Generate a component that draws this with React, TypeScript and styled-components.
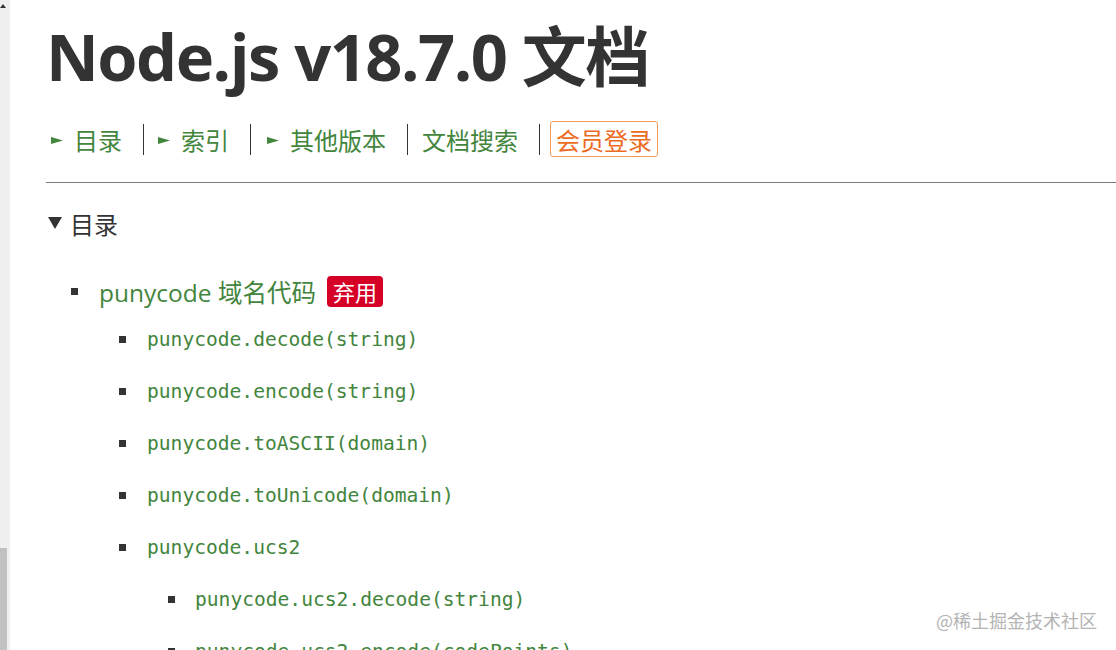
import React from "react";
import styled, { createGlobalStyle } from "styled-components";

const GlobalStyle = createGlobalStyle`
  html, body { margin: 0; padding: 0; background: #fff; }
  body { font-family: "Open Sans", "Noto Sans CJK SC", sans-serif; }
  * { box-sizing: border-box; }
`;

const GREEN = "#43853d";

const Page = styled.div`
  position: relative;
  width: 1116px;
  height: 650px;
  overflow: hidden;
  display: flex;
  align-items: stretch;
  background: #fff;
`;

const Strip = styled.div`
  width: 10px;
  flex: none;
  background: #f0f0f0;
  display: flex;
  flex-direction: column;
`;

const StripArrow = styled.svg`
  display: block;
  margin-top: 4px;
`;

const StripSpacer = styled.div`
  flex: 1;
`;

const StripThumb = styled.div`
  width: 7px;
  height: 102px;
  background: #c1c1c1;
`;

const Main = styled.main`
  flex: 1;
  display: block;
  padding-left: 36px;
`;

const Title = styled.h1`
  margin: 22px 0 0;
  font-size: 65px;
  line-height: 68px;
  font-weight: 700;
  color: #333;
  letter-spacing: -1.5px;
  white-space: nowrap;
`;

const Nav = styled.nav`
  margin-top: 31px;
  height: 36px;
  display: flex;
  align-items: center;
`;

const NavItem = styled.div<{ $first?: boolean; $pl: number }>`
  display: flex;
  align-items: center;
  height: 31px;
  padding-left: ${(p) => p.$pl}px;
  padding-right: 21px;
  border-left: ${(p) => (p.$first ? "none" : "1px solid #333")};
  font-size: 24px;
  color: ${GREEN};
  white-space: nowrap;
`;

const Pointer = styled.svg`
  display: block;
  margin-right: 11px;
  margin-top: 2px;
`;

const LoginWrap = styled.div`
  display: flex;
  align-items: center;
  padding-left: 10px;
  border-left: 1px solid #333;
  height: 31px;
`;

const LoginButton = styled.div`
  height: 36px;
  padding: 0 5px;
  display: flex;
  align-items: center;
  border: 1px solid #f09a55;
  border-radius: 3px;
  color: #ec6b1f;
  font-size: 24px;
  white-space: nowrap;
`;

const Rule = styled.div`
  margin-top: 25px;
  height: 1px;
  background: #7b7b7b;
`;

const Summary = styled.div`
  margin-top: 25px;
  height: 30px;
  display: flex;
  align-items: center;
  padding-left: 2px;
  font-size: 24px;
  color: #333;
`;

const DownTri = styled.svg`
  display: block;
  margin-right: 8px;
`;

const Tree = styled.div`
  margin-top: 37px;
`;

const TopRow = styled.div`
  height: 32px;
  display: flex;
  align-items: center;
  padding-left: 25px;
  font-size: 24.5px;
  color: ${GREEN};
  white-space: nowrap;
`;

const Bullet = styled.span`
  width: 7px;
  height: 7px;
  background: #333;
  flex: none;
  margin-right: 21px;
`;

const Badge = styled.span`
  margin-left: 11px;
  height: 31px;
  padding: 0 6px;
  display: inline-flex;
  align-items: center;
  background: #d60027;
  color: #fff;
  border-radius: 4px;
  font-size: 22px;
`;

const SubList = styled.div`
  margin-top: 6px;
`;

const SubRow = styled.div<{ $level: number }>`
  height: 52px;
  display: flex;
  align-items: center;
  padding-left: ${(p) => 25 + p.$level * 48}px;
  font-family: "DejaVu Sans Mono", "Liberation Mono", monospace;
  font-size: 19.6px;
  color: ${GREEN};
  white-space: nowrap;
`;

const SubBullet = styled(Bullet)<{ $nested?: boolean }>`
  margin-right: ${(p) => (p.$nested ? 20 : 21)}px;
  margin-left: ${(p) => (p.$nested ? 1 : 0)}px;
`;

const Watermark = styled.div`
  position: absolute;
  left: 936px;
  top: 608px;
  font-size: 18px;
  line-height: 24px;
  color: #b4b4b4;
  white-space: nowrap;
  font-family: "Noto Sans CJK SC", sans-serif;
`;

const PointerIcon = () => (
  <Pointer width="12" height="7" viewBox="0 0 12 7">
    <polygon points="0,0 12,3.5 0,7" fill={GREEN} />
  </Pointer>
);

const navItems = [
  { label: "目录", pointer: true, pl: 5 },
  { label: "索引", pointer: true, pl: 14 },
  { label: "其他版本", pointer: true, pl: 16 },
  { label: "文档搜索", pointer: false, pl: 14 },
];

const subItems: { text: string; level: number }[] = [
  { text: "punycode.decode(string)", level: 1 },
  { text: "punycode.encode(string)", level: 1 },
  { text: "punycode.toASCII(domain)", level: 1 },
  { text: "punycode.toUnicode(domain)", level: 1 },
  { text: "punycode.ucs2", level: 1 },
  { text: "punycode.ucs2.decode(string)", level: 2 },
  { text: "punycode.ucs2.encode(codePoints)", level: 2 },
];

export default function App() {
  return (
    <>
      <GlobalStyle />
      <Page>
        <Strip>
          <StripArrow width="6" height="4" viewBox="0 0 6 4">
            <polygon points="0,4 3,0 6,4" fill="#333" />
          </StripArrow>
          <StripSpacer />
          <StripThumb />
        </Strip>
        <Main>
          <Title>Node.js v18.7.0 文档</Title>
          <Nav>
            {navItems.map((n, i) => (
              <NavItem key={n.label} $first={i === 0} $pl={n.pl}>
                {n.pointer && <PointerIcon />}
                {n.label}
              </NavItem>
            ))}
            <LoginWrap>
              <LoginButton>会员登录</LoginButton>
            </LoginWrap>
          </Nav>
          <Rule />
          <Summary>
            <DownTri width="14" height="12" viewBox="0 0 14 12">
              <polygon points="0,0 14,0 7,12" fill="#333" />
            </DownTri>
            目录
          </Summary>
          <Tree>
            <TopRow>
              <Bullet />
              punycode 域名代码
              <Badge>弃用</Badge>
            </TopRow>
            <SubList>
              {subItems.map((s) => (
                <SubRow key={s.text} $level={s.level}>
                  <SubBullet $nested={s.level > 1} />
                  {s.text}
                </SubRow>
              ))}
            </SubList>
          </Tree>
        </Main>
        <Watermark>@稀土掘金技术社区</Watermark>
      </Page>
    </>
  );
}
